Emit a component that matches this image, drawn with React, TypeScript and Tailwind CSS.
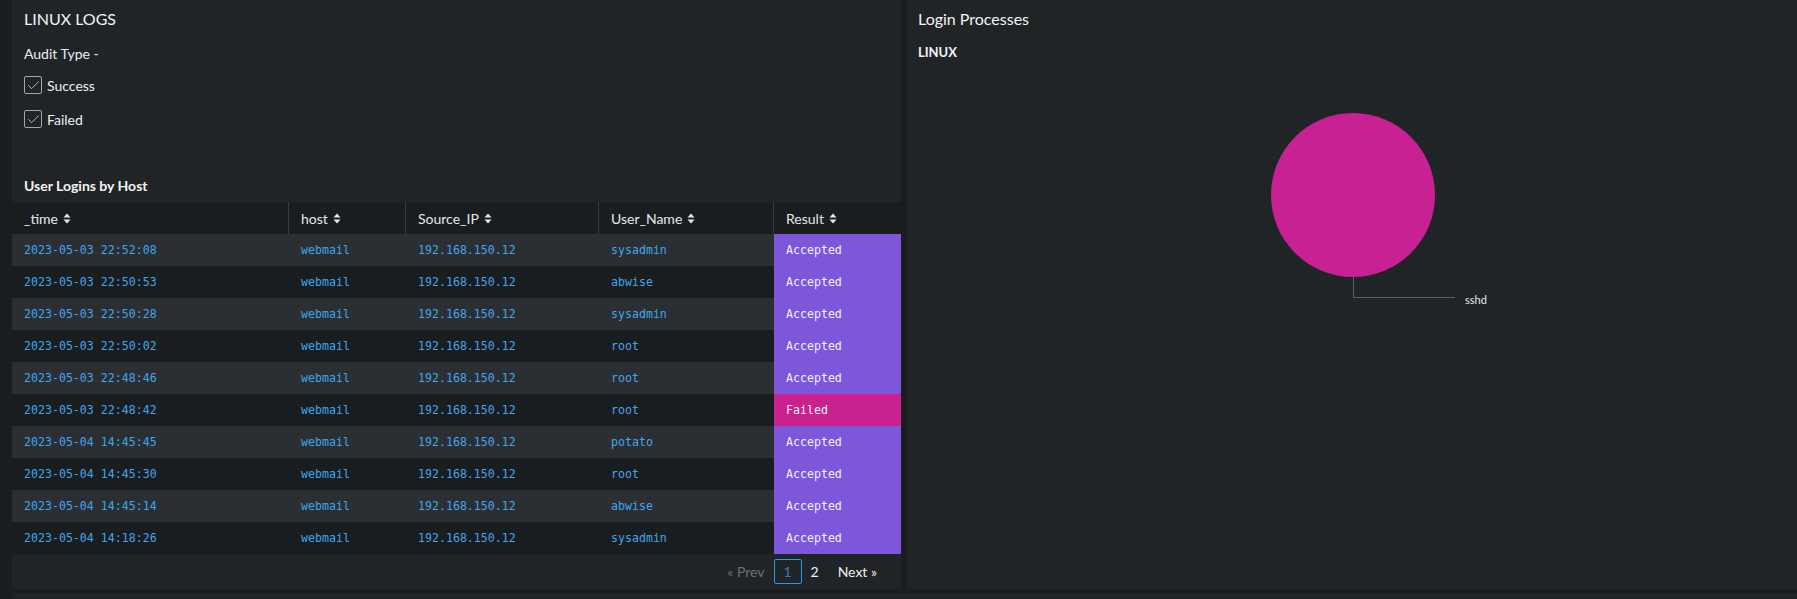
import { Check } from 'lucide-react';

type Row = {
  time: string;
  host: string;
  ip: string;
  user: string;
  result: 'Accepted' | 'Failed';
};

const rows: Row[] = [
  { time: '2023-05-03 22:52:08', host: 'webmail', ip: '192.168.150.12', user: 'sysadmin', result: 'Accepted' },
  { time: '2023-05-03 22:50:53', host: 'webmail', ip: '192.168.150.12', user: 'abwise', result: 'Accepted' },
  { time: '2023-05-03 22:50:28', host: 'webmail', ip: '192.168.150.12', user: 'sysadmin', result: 'Accepted' },
  { time: '2023-05-03 22:50:02', host: 'webmail', ip: '192.168.150.12', user: 'root', result: 'Accepted' },
  { time: '2023-05-03 22:48:46', host: 'webmail', ip: '192.168.150.12', user: 'root', result: 'Accepted' },
  { time: '2023-05-03 22:48:42', host: 'webmail', ip: '192.168.150.12', user: 'root', result: 'Failed' },
  { time: '2023-05-04 14:45:45', host: 'webmail', ip: '192.168.150.12', user: 'potato', result: 'Accepted' },
  { time: '2023-05-04 14:45:30', host: 'webmail', ip: '192.168.150.12', user: 'root', result: 'Accepted' },
  { time: '2023-05-04 14:45:14', host: 'webmail', ip: '192.168.150.12', user: 'abwise', result: 'Accepted' },
  { time: '2023-05-04 14:18:26', host: 'webmail', ip: '192.168.150.12', user: 'sysadmin', result: 'Accepted' },
];

const SortIcon = () => (
  <svg width="8" height="11" viewBox="0 0 8 11" className="ml-[5px]" fill="currentColor">
    <path d="M4 0.5 L7.5 4.5 H0.5 Z" />
    <path d="M4 10.5 L7.5 6.5 H0.5 Z" />
  </svg>
);

const HeaderCell = ({ label, width, last }: { label: string; width: string; last?: boolean }) => (
  <div className={`${width} flex items-center h-full pl-3 ${last ? '' : 'border-r border-[#363b40]'}`}>
    <span>{label}</span>
    <SortIcon />
  </div>
);

const CheckboxRow = ({ label }: { label: string }) => (
  <div className="h-[34px] flex items-center px-3">
    <div className="w-[18px] h-[18px] border border-[#a3a7ab] rounded-[2px] flex items-center justify-center">
      <Check className="w-[15px] h-[15px] text-[#bfc3c7]" strokeWidth={1.5} />
    </div>
    <span className="ml-[5px] text-[14px] text-[#eceef0]">{label}</span>
  </div>
);

export default function App() {
  return (
    <div className="w-full h-[599px] bg-[#1a1c1f] flex flex-col overflow-hidden font-['Lato',sans-serif]">
      <div className="flex h-[589px] pl-[12px] gap-[5px]">
        {/* left panel */}
        <div className="w-[889px] bg-[#212427] flex flex-col">
          <div className="h-[38px] flex items-center px-3 text-[16px] text-[#f3f4f5]">LINUX LOGS</div>
          <div className="h-[30px] flex items-center px-3 text-[14px] text-[#eceef0]">Audit Type -</div>
          <CheckboxRow label="Success" />
          <CheckboxRow label="Failed" />
          <div className="h-[32px]" />
          <div className="h-[34px] flex items-center px-3 text-[14px] font-bold text-[#f3f4f5]">User Logins by Host</div>

          <div className="h-[32px] flex bg-[#1a1d20] text-[14px] text-[#e4e7ea]">
            <HeaderCell label="_time" width="w-[277px]" />
            <HeaderCell label="host" width="w-[117px]" />
            <HeaderCell label="Source_IP" width="w-[193px]" />
            <HeaderCell label="User_Name" width="w-[175px]" />
            <HeaderCell label="Result" width="flex-1" last />
          </div>

          {rows.map((r, i) => (
            <div
              key={i}
              className={`h-[32px] flex font-['DejaVu_Sans_Mono',monospace] text-[11.6px] text-[#3fa6ec] ${
                i % 2 === 0 ? 'bg-[#2b2f33]' : 'bg-[#1a1d20]'
              }`}
            >
              <div className="w-[277px] flex items-center pl-3 pt-[2px]">{r.time}</div>
              <div className="w-[117px] flex items-center pl-3 pt-[2px]">{r.host}</div>
              <div className="w-[193px] flex items-center pl-3 pt-[2px]">{r.ip}</div>
              <div className="w-[175px] flex items-center pl-3 pt-[2px]">{r.user}</div>
              <div
                className={`flex-1 flex items-center pl-3 pt-[2px] text-[#f4f1fb] ${
                  r.result === 'Failed' ? 'bg-[#c9218e]' : 'bg-[#7c57da]'
                }`}
              >
                {r.result}
              </div>
            </div>
          ))}

          <div className="h-[35px] flex items-center justify-end pr-[24px] text-[14px]">
            <span className="text-[#6b7075] mr-[9px]">« Prev</span>
            <span className="w-[28px] h-[25px] border border-[#2b98dd] rounded-[2px] flex items-center justify-center text-[#2f7fb8]">
              1
            </span>
            <span className="text-[#eef0f2] ml-[9px] mr-[19px]">2</span>
            <span className="text-[#eef0f2]">Next »</span>
          </div>
        </div>

        {/* right panel */}
        <div className="flex-1 bg-[#212427] flex flex-col">
          <div className="h-[38px] flex items-center px-3 text-[16px] text-[#f3f4f5]">Login Processes</div>
          <div className="h-[30px] flex items-center px-3 text-[13px] font-bold text-[#f3f4f5]">LINUX</div>
          <svg width="891" height="519" className="block">
            <circle cx="447" cy="127" r="82" fill="#c82194" />
            <path d="M447.5 209 V229.5 H549" stroke="#5b5f63" strokeWidth="1" fill="none" />
            <text x="559" y="236" fontSize="11" fill="#e6e8ea" fontFamily="Lato, sans-serif">
              sshd
            </text>
          </svg>
        </div>
      </div>
      <div className="h-[4px]" />
      <div className="ml-[12px] flex-1 bg-[#212427]" />
    </div>
  );
}
